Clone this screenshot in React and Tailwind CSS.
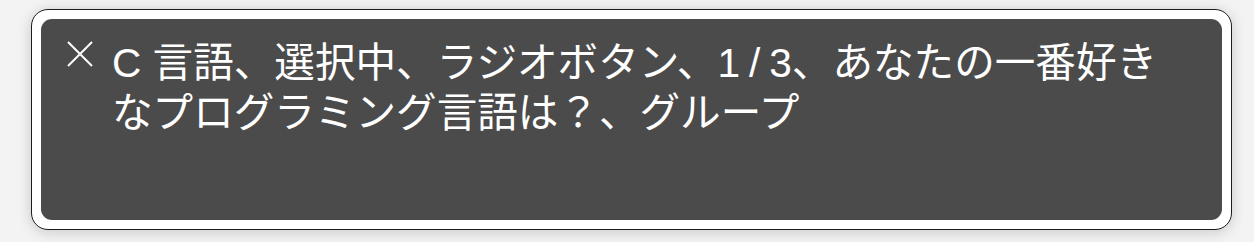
export default function App() {
  return (
    <div className="w-[1254px] h-[242px] bg-[#f3f3f3] pl-[31px] pt-[9px]">
      <div className="w-[1201px] h-[221px] rounded-[17px] border border-[#1c1c1c] bg-white p-[9px] shadow-[0_2px_14px_rgba(0,0,0,0.18)]">
        <div className="h-full w-full rounded-[11px] bg-[#4b4b4b] flex pl-[26px] pt-[22px]">
          <svg width="26" height="26" viewBox="0 0 26 26" className="shrink-0">
            <path d="M1 1 L25 25 M25 1 L1 25" stroke="#ffffff" strokeWidth="2" strokeLinecap="butt" />
          </svg>
          <p
            className="ml-[19px] text-white text-[40.6px] leading-[50px] -mt-[3px] whitespace-nowrap"
            style={{ fontFamily: '"Liberation Sans", "Noto Sans CJK JP", sans-serif' }}
          >
            C 言語、選択中、ラジオボタン、<span className="tracking-[9px]">1/</span>3、あなたの一番好き
            <br />
            なプログラミング言語は？、グループ
          </p>
        </div>
      </div>
    </div>
  );
}
